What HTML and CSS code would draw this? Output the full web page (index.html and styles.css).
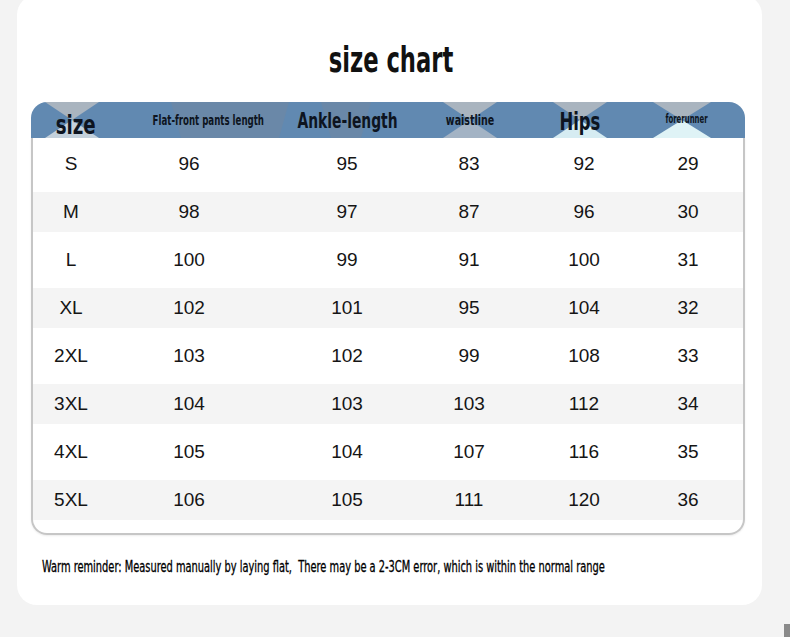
FILE: index.html
```html
<!DOCTYPE html>
<html>
<head>
<meta charset="utf-8">
<link rel="stylesheet" href="styles.css">
</head>
<body>
<div class="page">
  <div class="card">
    <h1 class="title"><span class="squeeze">size chart</span></h1>
    <div class="table">
      <div class="head">
        <svg class="deco" width="714" height="36" viewBox="0 0 714 36" preserveAspectRatio="none">
          <polygon points="140,0 258,0 248,36 150,36" fill="#6a88a8"/>
          <polygon points="290,0 340,0 330,36 300,36" fill="#6a88a8"/>
          <polygon points="14,0 68,0 41,18" fill="#a9b4bf"/>
          <polygon points="14,36 68,36 41,18" fill="#c4d1dc"/>
          <polygon points="412,0 466,0 439,18" fill="#a9b4bf"/>
          <polygon points="412,36 466,36 439,18" fill="#a3b3c4"/>
          <polygon points="522,0 576,0 549,18" fill="#a9b4bf"/>
          <polygon points="522,36 576,36 549,18" fill="#d6ecf2"/>
          <polygon points="622,0 680,0 651,18" fill="#a9b4bf"/>
          <polygon points="622,36 680,36 651,18" fill="#dff3f6"/>
        </svg>
        <div class="hcell h-size"><span class="squeeze">size</span></div>
        <div class="hcell h-flat"><span class="squeeze">Flat-front pants length</span></div>
        <div class="hcell h-ankle"><span class="squeeze">Ankle-length</span></div>
        <div class="hcell h-waist"><span class="squeeze">waistline</span></div>
        <div class="hcell h-hips"><span class="squeeze">Hips</span></div>
        <div class="hcell h-fore"><span class="squeeze">forerunner</span></div>
      </div>
      <div class="body">
        <div class="row"><span>S</span><span>96</span><span>95</span><span>83</span><span>92</span><span>29</span></div>
        <div class="row alt"><span>M</span><span>98</span><span>97</span><span>87</span><span>96</span><span>30</span></div>
        <div class="row"><span>L</span><span>100</span><span>99</span><span>91</span><span>100</span><span>31</span></div>
        <div class="row alt"><span>XL</span><span>102</span><span>101</span><span>95</span><span>104</span><span>32</span></div>
        <div class="row"><span>2XL</span><span>103</span><span>102</span><span>99</span><span>108</span><span>33</span></div>
        <div class="row alt"><span>3XL</span><span>104</span><span>103</span><span>103</span><span>112</span><span>34</span></div>
        <div class="row"><span>4XL</span><span>105</span><span>104</span><span>107</span><span>116</span><span>35</span></div>
        <div class="row alt"><span>5XL</span><span>106</span><span>105</span><span>111</span><span>120</span><span>36</span></div>
      </div>
    </div>
    <p class="note"><span class="note-text">Warm reminder: Measured manually by laying flat,&nbsp; There may be a 2-3CM error, which is within the normal range</span></p>
  </div>
  <div class="corner-mark"></div>
</div>
</body>
</html>
```
FILE: styles.css
```css
html, body {
  margin: 0;
  padding: 0;
  background: #f3f3f3;
}
.page {
  position: relative;
  width: 790px;
  height: 637px;
  overflow: hidden;
}
.card {
  margin-left: 17px;
  margin-top: -5px;
  width: 745px;
  height: 610px;
  box-sizing: border-box;
  background: #ffffff;
  border-radius: 20px;
  padding: 47px 17px 0 14px;
}
.squeeze {
  display: inline-block;
  transform: scaleX(0.8);
  white-space: nowrap;
}
.title {
  margin: 0;
  height: 48px;
  text-align: center;
  font-family: "DejaVu Sans Condensed", "DejaVu Sans", sans-serif;
  font-weight: 700;
  font-size: 36px;
  line-height: 36px;
  color: #111;
  padding-left: 6px;
}
.title .squeeze {
  transform: scaleX(0.70);
}
.table {
  width: 714px;
  margin-top: 12px;
}
.head {
  position: relative;
  height: 36px;
  background: #6189b1;
  border-radius: 16px 16px 0 0;
  overflow: hidden;
  display: grid;
  grid-template-columns: 78px 160px 156px 88px 142px 66px;
  align-items: center;
  font-family: "DejaVu Sans Condensed", "DejaVu Sans", sans-serif;
  font-weight: 700;
  color: #0d1420;
}
.deco {
  position: absolute;
  left: 0;
  top: 0;
}
.hcell {
  position: relative;
  text-align: center;
  white-space: nowrap;
  line-height: 1;
}
.h-size {
  font-size: 27px;
  padding-left: 12px;
  padding-top: 8px;
}
.h-size .squeeze {
  transform: scaleX(0.75);
}
.h-flat {
  font-size: 14px;
  padding-left: 18px;
}
.h-flat .squeeze {
  transform: scaleX(0.685);
}
.h-ankle {
  font-size: 22px;
  padding-left: 2px;
  padding-top: 2px;
}
.h-ankle .squeeze {
  transform: scaleX(0.70);
}
.h-waist {
  font-size: 14px;
  padding-left: 2px;
}
.h-waist .squeeze {
  transform: scaleX(0.755);
}
.h-hips {
  font-size: 24px;
  padding-right: 8px;
  padding-top: 3px;
}
.h-hips .squeeze {
  transform: scaleX(0.76);
}
.h-fore {
  font-size: 11.5px;
  padding-right: 2px;
  padding-bottom: 1px;
}
.h-fore .squeeze {
  transform: scaleX(0.67);
}
.body {
  border: 2px solid #c6c6c6;
  border-top: 0;
  border-radius: 0 0 16px 16px;
  padding: 2px 0 9px;
  box-shadow: 0 1px 2px rgba(0,0,0,0.08);
}
.row {
  display: grid;
  grid-template-columns: 76px 160px 156px 88px 142px 66px;
  height: 48px;
  box-sizing: border-box;
  align-items: center;
  font-family: "Liberation Sans", Arial, sans-serif;
  font-size: 19px;
  color: #151515;
  text-align: center;
}
.row.alt {
  padding: 4px 0;
  background: #f4f4f4;
  background-clip: content-box;
}
.note {
  margin: 23px 0 0 11px;
  font-family: "DejaVu Sans Condensed", "DejaVu Sans", sans-serif;
  font-size: 15px;
  font-weight: 400;
  color: #000;
  white-space: nowrap;
}
.note-text {
  display: inline-block;
  transform: scaleX(0.73);
  transform-origin: left center;
  -webkit-text-stroke: 0.3px #000;
}
.corner-mark {
  position: absolute;
  right: 0;
  bottom: 0;
  width: 6px;
  height: 13px;
  background: #8a8a8a;
}
```
